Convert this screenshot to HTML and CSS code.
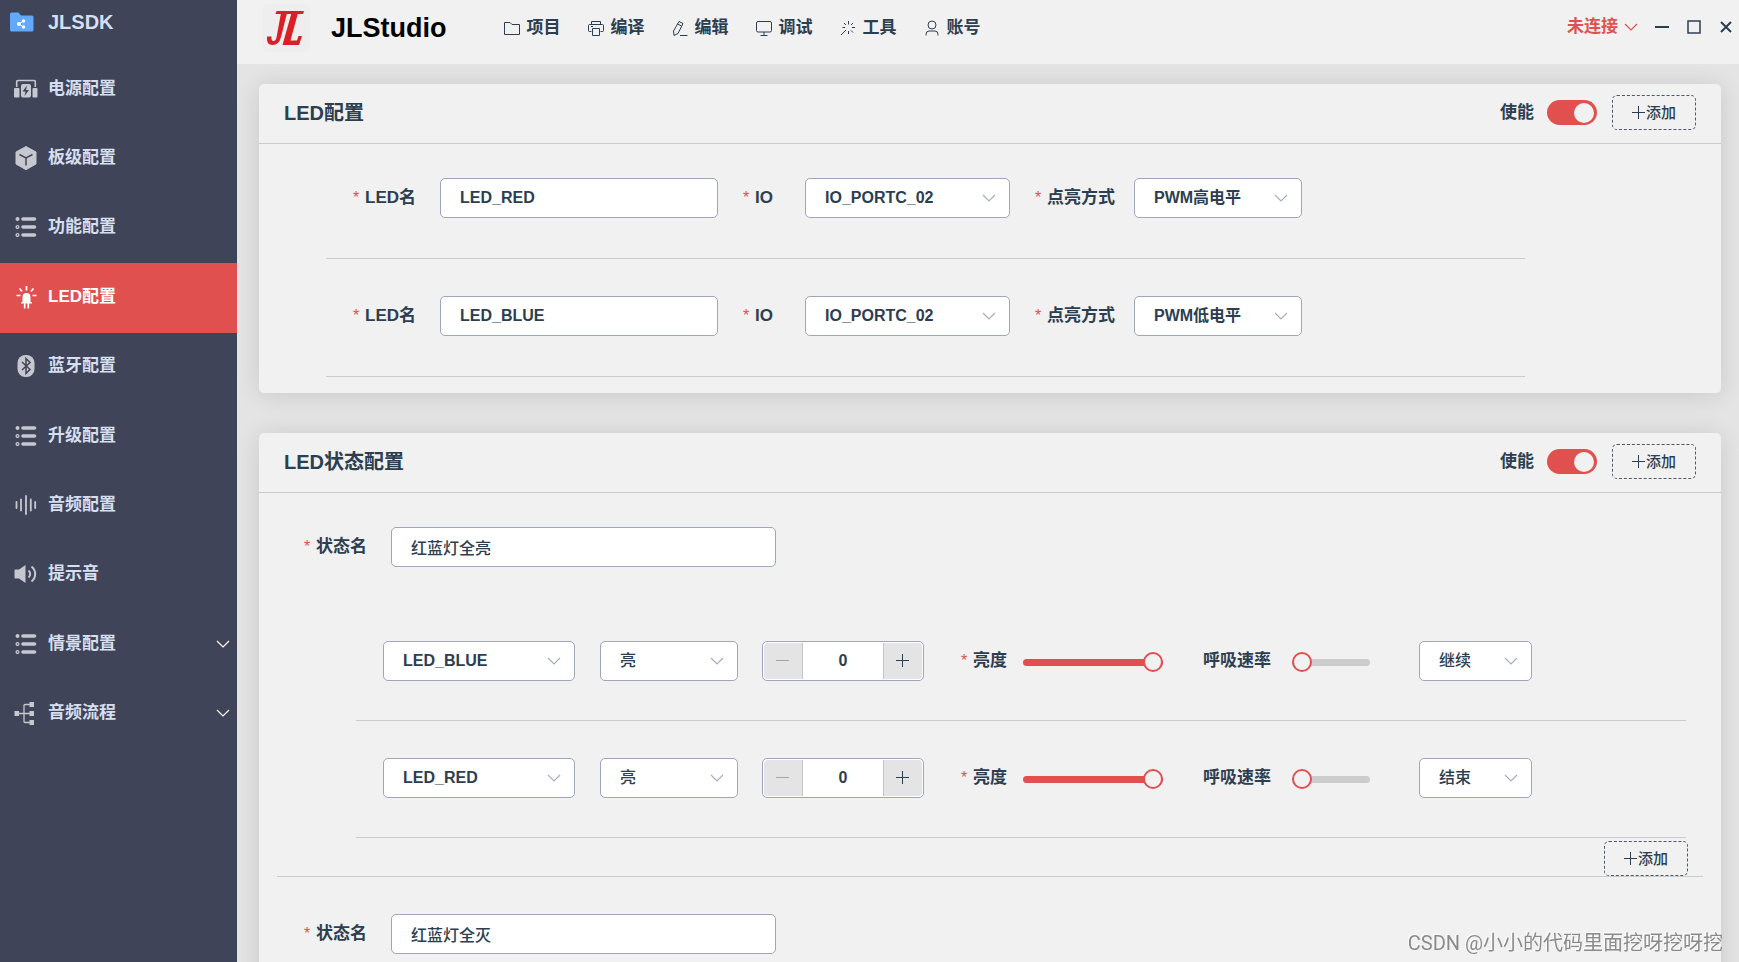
FILE: index.html
```html
<!DOCTYPE html>
<html lang="zh-CN">
<head>
<meta charset="utf-8">
<title>JLStudio</title>
<link rel="stylesheet" href="styles.css">
</head>
<body>
<svg class="defs" aria-hidden="true">
  <symbol id="chevron" viewBox="0 0 14 14"><path d="M1 4l6 6 6-6" fill="none" stroke="currentColor" stroke-width="1.200"/></symbol>
  <symbol id="plus" viewBox="0 0 14 14"><path d="M6.500 0v13M0 6.500h13" fill="none" stroke="currentColor"/></symbol>
  <symbol id="minus" viewBox="0 0 14 14"><path d="M0 6.500h13" fill="none" stroke="currentColor"/></symbol>
  <symbol id="list" viewBox="0 0 24 24"><path d="M9 4h11.500M9 12h11.500M9 20h11.500" stroke="currentColor" stroke-width="3.600" stroke-linecap="round"/><circle cx="3.500" cy="4" r="2" fill="currentColor"/><circle cx="3.500" cy="12" r="1.400" fill="none" stroke="currentColor" stroke-width="1.300"/><circle cx="3.500" cy="20" r="1.400" fill="none" stroke="currentColor" stroke-width="1.300"/></symbol>
</svg>
<div class="app">
  <aside class="sidebar">
    <div class="sdk">
      <svg class="side-icon" viewBox="0 0 24 24"><path d="M0 4q0-1.500 1.500-1.500H8.500L11 5.500H22q1.500 0 1.500 1.500V20q0 1.500-1.500 1.500H1.500Q0 21.500 0 20z" fill="#61a8ff"/><g fill="#fff"><circle cx="9" cy="14" r="2"/><circle cx="13.500" cy="11" r="1.700"/><circle cx="13.500" cy="17" r="1.700"/></g><path d="M13.500 11L9 14l4.500 3" stroke="#fff" fill="none"/></svg>
      <span>JLSDK</span>
    </div>
    <nav class="side-nav">
      <a href="#power"><svg class="side-icon" viewBox="0 0 24 24"><path d="M2.700 10V4.500q0-1 1-1h16.600q1 0 1 1V10" fill="none" stroke="currentColor" stroke-width="1.600"/><rect x="0" y="11" width="5.500" height="9.500" rx="1" fill="currentColor"/><rect x="18.500" y="11" width="5" height="9.500" rx="1" fill="currentColor"/><rect x="7" y="7" width="10" height="13.500" rx="2" fill="currentColor"/><path d="M13 8.500L8.500 14.500h3L10.500 19 15 13h-3z" fill="#3f4458"/></svg><span>电源配置</span></a>
      <a href="#board"><svg class="side-icon" viewBox="0 0 24 24"><path d="M12 .500l10 5.500v12l-10 5.700L2 18V6z" fill="currentColor" stroke="currentColor" stroke-linejoin="round"/><path d="M5.500 8.500L12 12l6.500-3.500M12 12v7.500" fill="none" stroke="#3f4458" stroke-width="1.500"/></svg><span>板级配置</span></a>
      <a href="#function"><svg class="side-icon"><use href="#list"/></svg><span>功能配置</span></a>
      <a href="#led" class="active" aria-current="page"><svg class="side-icon" viewBox="0 0 24 24"><path d="M8.500 17v-5a4 4 0 0 1 8 0v5h1.500v1.500H7V17z" fill="currentColor"/><path d="M10.700 18v5.500M14.300 18v5.500M12.500 1v4.500M5.500 3.500L8 6.500M19.500 3.500L17 6.500M2.500 10.500h4M18.500 10.500h4" stroke="currentColor" stroke-width="1.700"/></svg><span>LED配置</span></a>
      <a href="#bluetooth"><svg class="side-icon" viewBox="0 0 24 24"><rect x="3.500" y="1" width="17" height="22" rx="8" fill="currentColor"/><path d="M8 8l8 7.500-4 4V4.500l4 4L8 16" fill="none" stroke="#3f4458" stroke-width="1.500"/></svg><span>蓝牙配置</span></a>
      <a href="#upgrade"><svg class="side-icon"><use href="#list"/></svg><span>升级配置</span></a>
      <a href="#audio"><svg class="side-icon" viewBox="0 0 24 24"><path d="M2.500 9v6M7 6.500v11M12 3v18M16.800 6.500v11M21.200 9v6" stroke="currentColor" stroke-width="1.800" stroke-linecap="round"/></svg><span>音频配置</span></a>
      <a href="#tone"><svg class="side-icon" viewBox="0 0 24 24"><path d="M1.500 7.500H5L11.500 3v18L5 16.500H1.500Q.500 16.500.500 15.500v-7q0-1 1-1z" fill="currentColor"/><path d="M14.500 8.500a4.500 4.500 0 0 1 0 7M17.500 4.500a9.500 9.500 0 0 1 0 15" fill="none" stroke="currentColor" stroke-width="2"/></svg><span>提示音</span></a>
      <a href="#scene"><svg class="side-icon"><use href="#list"/></svg><span>情景配置</span><svg class="chev"><use href="#chevron"/></svg></a>
      <a href="#flow"><svg class="side-icon" viewBox="0 0 24 24"><path d="M4 12.500h13M17 3.500h-6q-1 0-1 1v16q0 1 1 1h6" fill="none" stroke="currentColor" stroke-width="1.300"/><path d="M.500 10H5v5H.500zM15.500 1H20v5h-4.500zM15.500 10H20v5h-4.500zM15.500 19H20v5h-4.500z" fill="currentColor"/></svg><span>音频流程</span><svg class="chev"><use href="#chevron"/></svg></a>
    </nav>
  </aside>

  <div class="workspace">
    <header class="topbar">
      <svg class="logo" viewBox="0 0 48 48" role="img" aria-label="JL"><rect width="48" height="48" rx="6" fill="#eee"/><g fill="#dc1f26"><path d="M14.500 7H42l-1 3H13.500z"/><path d="M19 9h6l-6 24q-2 8-8.500 8Q4 41 5 32.500h4.500Q9 37 11.500 37q2 0 3-3.500z"/><path d="M29.500 9h6.500l-7.500 27.500H35L36.500 32H40l-3 9H20.500z"/></g></svg>
      <h1 class="brand">JLStudio</h1>
      <nav class="menu">
        <a href="#project"><svg viewBox="0 0 16 16"><path d="M.500 2.500H6l2 2h7.500v10H.500z"/></svg>项目</a>
        <a href="#compile"><svg viewBox="0 0 16 16"><path d="M3.500 4.500v-3h9v3M3.500 11.500h-2q-1 0-1-1v-5q0-1 1-1h13q1 0 1 1v5q0 1-1 1h-2M4.500 8.500h7v7h-7zM3 6.500h2"/></svg>编译</a>
        <a href="#edit"><svg viewBox="0 0 16 16"><path d="M7 1.500l4 2L6 13.500 2 15.500 1.500 11zM5.500 4l4 2M8 15.500h7.500"/></svg>编辑</a>
        <a href="#debug"><svg viewBox="0 0 16 16"><rect x=".500" y="1.500" width="15" height="10.500" rx="1.500"/><path d="M8 12v3M4.500 15.500h7"/></svg>调试</a>
        <a href="#tools"><svg viewBox="0 0 16 16"><path d="M8.500 1v3.500M8.500 11v3M12 7.500h3M2.500 7.500H5M4 3l2 2M13 3l-2 2M13 12.500l-2-2M6 10l-5 5"/></svg>工具</a>
        <a href="#account"><svg viewBox="0 0 16 16"><circle cx="8" cy="5" r="4"/><path d="M2 15.500v-1q0-3.500 3-3.500h6q3 0 3 3.500v1"/></svg>账号</a>
      </nav>
      <div class="window-tools">
        <button class="status" type="button">未连接<svg class="chev"><use href="#chevron"/></svg></button>
        <button class="win min" type="button" aria-label="最小化"><svg viewBox="0 0 16 16"><path d="M1 8h14"/></svg></button>
        <button class="win max" type="button" aria-label="最大化"><svg viewBox="0 0 16 16"><rect x="2" y="2" width="12" height="12"/></svg></button>
        <button class="win close" type="button" aria-label="关闭"><svg viewBox="0 0 16 16"><path d="M3 3l10 10M13 3L3 13"/></svg></button>
      </div>
    </header>

    <main class="content">
      <section class="card">
        <div class="card-head">
          <h2>LED配置</h2>
          <label class="toggle-label" for="en1">使能</label>
          <input class="toggle" id="en1" type="checkbox" role="switch" checked>
          <button class="add" type="button"><svg><use href="#plus"/></svg>添加</button>
        </div>
        <div class="led-list">
          <div class="row led-row">
            <div class="field"><label class="req w-name" for="n1">LED名</label><input class="box led-name" id="n1" value="LED_RED"></div>
            <div class="field"><label class="req w-io" for="io1">IO</label><div class="pick io"><select class="box" id="io1"><option>IO_PORTC_02</option></select><svg class="chev"><use href="#chevron"/></svg></div></div>
            <div class="field"><label class="req w-mode" for="m1">点亮方式</label><div class="pick mode"><select class="box" id="m1"><option>PWM高电平</option></select><svg class="chev"><use href="#chevron"/></svg></div></div>
          </div>
          <div class="row led-row">
            <div class="field"><label class="req w-name" for="n2">LED名</label><input class="box led-name" id="n2" value="LED_BLUE"></div>
            <div class="field"><label class="req w-io" for="io2">IO</label><div class="pick io"><select class="box" id="io2"><option>IO_PORTC_02</option></select><svg class="chev"><use href="#chevron"/></svg></div></div>
            <div class="field"><label class="req w-mode" for="m2">点亮方式</label><div class="pick mode"><select class="box" id="m2"><option>PWM低电平</option></select><svg class="chev"><use href="#chevron"/></svg></div></div>
          </div>
        </div>
      </section>

      <section class="card">
        <div class="card-head">
          <h2>LED状态配置</h2>
          <label class="toggle-label" for="en2">使能</label>
          <input class="toggle" id="en2" type="checkbox" role="switch" checked>
          <button class="add" type="button"><svg><use href="#plus"/></svg>添加</button>
        </div>
        <div class="state">
          <div class="field state-field"><label class="req w-name" for="s1">状态名</label><input class="box state-name cjk" id="s1" value="红蓝灯全亮"></div>
          <div class="steps">
            <div class="row step-row">
              <div class="pick led"><select class="box" aria-label="LED"><option>LED_BLUE</option></select><svg class="chev"><use href="#chevron"/></svg></div>
              <div class="pick onoff"><select class="box cjk" aria-label="亮灭"><option>亮</option></select><svg class="chev"><use href="#chevron"/></svg></div>
              <div class="number"><button type="button" aria-label="减少" disabled><svg><use href="#minus"/></svg></button><input value="0" aria-label="时间" inputmode="numeric"><button type="button" aria-label="增加"><svg><use href="#plus"/></svg></button></div>
              <div class="field bright"><label class="req w-bright" for="b1">亮度</label><input class="range full" id="b1" type="range" value="100"></div>
              <div class="field breath"><label class="w-breath" for="r1">呼吸速率</label><input class="range short" id="r1" type="range" value="0"></div>
              <div class="pick next"><select class="box cjk" aria-label="下一步"><option>继续</option></select><svg class="chev"><use href="#chevron"/></svg></div>
            </div>
            <div class="row step-row">
              <div class="pick led"><select class="box" aria-label="LED"><option>LED_RED</option></select><svg class="chev"><use href="#chevron"/></svg></div>
              <div class="pick onoff"><select class="box cjk" aria-label="亮灭"><option>亮</option></select><svg class="chev"><use href="#chevron"/></svg></div>
              <div class="number"><button type="button" aria-label="减少" disabled><svg><use href="#minus"/></svg></button><input value="0" aria-label="时间" inputmode="numeric"><button type="button" aria-label="增加"><svg><use href="#plus"/></svg></button></div>
              <div class="field bright"><label class="req w-bright" for="b2">亮度</label><input class="range full" id="b2" type="range" value="100"></div>
              <div class="field breath"><label class="w-breath" for="r2">呼吸速率</label><input class="range short" id="r2" type="range" value="0"></div>
              <div class="pick next"><select class="box cjk" aria-label="下一步"><option>结束</option></select><svg class="chev"><use href="#chevron"/></svg></div>
            </div>
          </div>
          <div class="state-foot"><button class="add" type="button"><svg><use href="#plus"/></svg>添加</button></div>
        </div>
        <div class="state">
          <div class="field state-field"><label class="req w-name" for="s2">状态名</label><input class="box state-name cjk" id="s2" value="红蓝灯全灭"></div>
        </div>
      </section>
    </main>
  </div>
</div>
<div class="watermark">CSDN @小小的代码里面挖呀挖呀挖</div>
</body>
</html>
```
FILE: styles.css
```css
* { box-sizing: border-box; }

body {
  margin: 0;
  overflow: hidden;
  color: #2c3e50;
  background: #e4e4e4;
  font: bold 17px/24px "Liberation Sans", "Noto Sans CJK SC", sans-serif;
}

a { color: inherit; text-decoration: none; }
button, input, select { margin: 0; color: inherit; font: inherit; }
button { padding: 0; border: 0; background: none; }
svg { display: block; flex: none; }
.defs { position: absolute; width: 0; height: 0; }

.app { display: flex; height: 100vh; }

/* sidebar */
.sidebar { flex: none; width: 237px; background: #3f4458; color: #d5dff0; }
.sdk { display: flex; align-items: center; gap: 14px; height: 55px; padding: 0 0 12px 10px; font-size: 20px; }
.side-icon { width: 24px; height: 24px; color: #c6c8cf; }
.side-nav { display: grid; grid-auto-rows: 1fr; height: 694px; }
.side-nav a { display: flex; align-items: center; gap: 10px; padding: 0 7px 2px 14px; }
.side-nav .active, .side-nav .active .side-icon { color: #fff; }
.side-nav .active { background: #e0504f; }
.chev { width: 14px; height: 14px; }
.side-nav .chev { margin-left: auto; color: #fff; }

/* top bar */
.workspace { display: flex; flex: 1; flex-direction: column; min-width: 0; }
.topbar { display: flex; flex: none; align-items: center; height: 64px; padding: 0 0 8px 25px; background: #f1f1f1; }
.logo { width: 48px; height: 48px; }
.brand { margin: 0 0 0 21px; color: #000; font-size: 27px; line-height: 32px; }
.menu { display: flex; gap: 27px; margin-left: 57px; }
.menu a { display: flex; align-items: center; gap: 7px; }
.menu svg { width: 16px; height: 16px; fill: none; stroke: currentColor; }
.window-tools { display: flex; align-items: center; gap: 16px; margin-left: auto; padding: 0 5px 2px 0; }
.status { display: flex; align-items: center; gap: 6px; color: #e0504f; }
.win svg { width: 16px; height: 16px; fill: none; stroke: currentColor; stroke-width: 2; }
.max svg { stroke-width: 1.500; }

/* cards */
.content { display: flex; flex: 1; flex-direction: column; gap: 40px; min-height: 0; padding: 20px 18px 0 22px; overflow: hidden; }
.card { flex: none; border-radius: 5px; background: #f1f1f1; box-shadow: 0 2px 24px rgba(0, 0, 0, .12); }
.card-head { display: flex; align-items: center; height: 60px; padding: 0 25px 2px; border-bottom: 1px solid #ccc; }
.card-head h2 { margin: 0 auto 0 0; font-size: 20px; line-height: 28px; }
.card-head .add { margin-left: 15px; }
.add { display: flex; align-items: center; justify-content: center; width: 84px; height: 35px; border: 1px dashed #4c596b; border-radius: 5px; font-size: 15px; font-weight: 500; }
.add svg { width: 14px; height: 14px; }

.toggle { position: relative; width: 50px; height: 25px; margin-left: 13px; border-radius: 13px; background: #c8c8c8; appearance: none; }
.toggle:checked { background: #e0504f; }
.toggle::before { content: ""; position: absolute; top: 3px; left: 3px; width: 20px; height: 20px; border-radius: 50%; background: #f1f1f1; }
.toggle:checked::before { left: 27px; }

/* fields */
.row { display: flex; align-items: center; padding: 37px 0 40px 27px; border-bottom: 1px solid #ccc; }
.field { display: flex; align-items: center; }
.field label { flex: none; white-space: nowrap; }
.req::before { content: "*"; display: inline-block; width: 12px; color: #e0504f; font-size: 16px; font-weight: 400; }
.w-name { width: 87px; }
.w-io { width: 62px; }
.w-mode { width: 99px; }
.w-bright { width: 62px; }
.w-breath { width: 89px; }

.box { width: 100%; height: 40px; padding: 0 19px; border: 1px solid #a0a5bd; border-radius: 5px; outline: 0; background: #fff; font-size: 16px; appearance: none; }
.cjk { font-weight: 500; }
.pick { position: relative; flex: none; }
.pick .chev { position: absolute; top: 13px; right: 14px; color: #a8abc6; pointer-events: none; }

.led-list { width: 82%; margin-left: 67px; padding-bottom: 16px; }
.led-row { gap: 25px; }
.led-row:first-child { padding-top: 34px; }
.led-name { width: 278px; }
.io { width: 205px; }
.mode { width: 168px; }

.state { margin: 0 18px; padding-top: 34px; border-bottom: 1px solid #ccc; }
.state + .state { padding: 37px 0; }
.state-field { padding-left: 27px; }
.state-name { width: 385px; }
.steps { margin: 37px 17px 0 79px; }
.step-row { padding-bottom: 39px; }
.led { width: 192px; margin-right: 25px; }
.onoff { width: 138px; margin-right: 24px; }
.next { width: 113px; margin-left: 49px; }
.bright { margin-left: 37px; }
.breath { margin-left: 40px; }
.state-foot { display: flex; justify-content: flex-end; padding: 3px 15px 0 0; }

.number { display: flex; flex: none; width: 162px; height: 40px; padding: 1px; border: 1px solid #a0a5bd; border-radius: 5px; background: #fff; }
.number button { display: flex; flex: none; align-items: center; justify-content: center; width: 39px; background: #e4e4e4; }
.number button:first-child { border-right: 1px solid #c4c4c4; border-radius: 4px 0 0 4px; color: #a0a5b5; }
.number button:last-child { border-left: 1px solid #c4c4c4; border-radius: 0 4px 4px 0; }
.number svg { width: 14px; height: 14px; }
.number input { flex: 1; min-width: 0; padding: 0; border: 0; outline: 0; background: none; font-size: 16px; text-align: center; }

.range { height: 20px; margin: 3px 0 0; background: none; appearance: none; }
.range::-webkit-slider-runnable-track { height: 7px; border-radius: 4px; background: #ccc; }
.range::-webkit-slider-thumb { width: 20px; height: 20px; margin-top: -7px; border: 2px solid #e0504f; border-radius: 50%; background: #f1f1f1; appearance: none; }
.full { width: 140px; }
.full::-webkit-slider-runnable-track { background: #e0504f; }
.short { width: 78px; }

.watermark { position: fixed; right: 16px; bottom: 4px; color: #8a8a8a; font: 400 20px/30px Roboto, "Noto Sans CJK SC", sans-serif; text-shadow: -1px -1px 0 #fff; pointer-events: none; }
```
